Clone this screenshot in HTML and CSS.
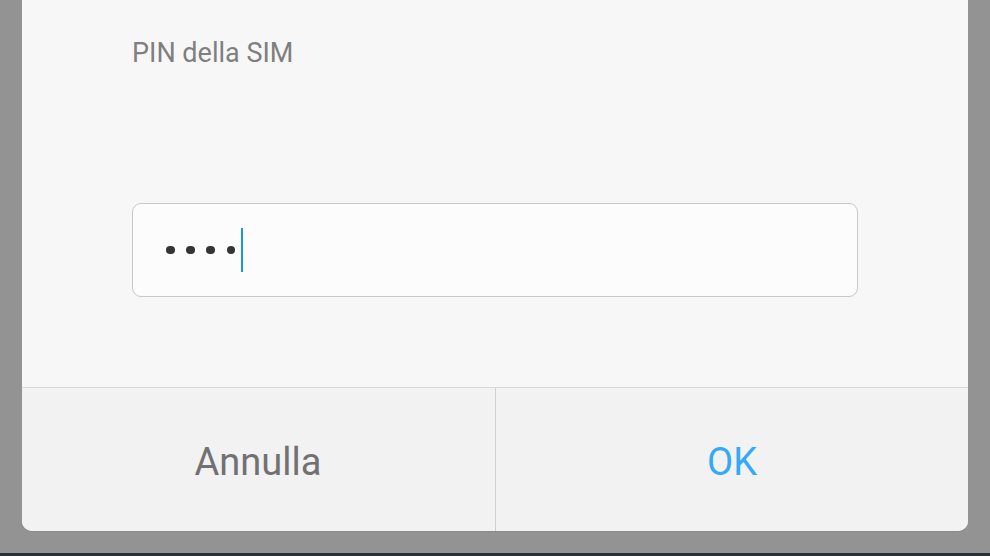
FILE: index.html
```html
<!DOCTYPE html>
<html lang="it">
<head>
<meta charset="utf-8">
<link rel="stylesheet" href="styles.css">
</head>
<body>
<div class="screen">
  <div class="dialog">
    <div class="content">
      <div class="label">PIN della SIM</div>
      <div class="field">
        <span class="dot"></span><span class="dot"></span><span class="dot"></span><span class="dot"></span><span class="cursor"></span>
      </div>
    </div>
    <div class="actions">
      <div class="btn cancel">Annulla</div>
      <div class="btn ok">OK</div>
    </div>
  </div>
</div>
<div class="navbar"></div>
</body>
</html>
```
FILE: styles.css
```css
html, body {
  margin: 0;
  padding: 0;
}
body {
  width: 990px;
  height: 556px;
  overflow: hidden;
  background: #939393;
  font-family: Roboto, "Noto Sans", sans-serif;
  display: flex;
  flex-direction: column;
}
.screen {
  height: 553px;
  padding: 0 22px;
  box-sizing: border-box;
}
.dialog {
  width: 946px;
  height: 531px;
  background: #f7f7f7;
  border-radius: 0 0 10px 10px;
  overflow: hidden;
  display: flex;
  flex-direction: column;
  box-shadow: 0 1px 0 rgba(0,0,0,0.06);
}
.content {
  height: 388px;
  box-sizing: border-box;
  padding: 37px 0 0 110px;
  border-bottom: 1px solid #d7d7d7;
  flex: none;
}
.label {
  font-size: 27px;
  line-height: 32px;
  color: #7f7f7f;
}
.field {
  margin-top: 134px;
  width: 726px;
  height: 94px;
  box-sizing: border-box;
  border: 1px solid #c8c8c8;
  border-radius: 9px;
  background: #fcfcfc;
  display: flex;
  align-items: center;
  padding-left: 33px;
  gap: 11.7px;
}
.dot {
  width: 8.5px;
  height: 8.5px;
  border-radius: 50%;
  background: #343434;
}
.cursor {
  width: 2.4px;
  height: 44px;
  background: #1a96e0;
  margin-left: -6px;
  margin-top: -1px;
}
.actions {
  flex: 1;
  display: flex;
  background: #f2f2f2;
}
.btn {
  flex: 1;
  display: flex;
  align-items: center;
  justify-content: center;
  font-size: 38px;
  padding-top: 4px;
}
.cancel {
  color: #717171;
  border-right: 1px solid #d0d0d0;
  padding-right: 1px;
}
.ok {
  color: #33a9f8;
}
.navbar {
  flex: 1;
  background: #263238;
}
```
